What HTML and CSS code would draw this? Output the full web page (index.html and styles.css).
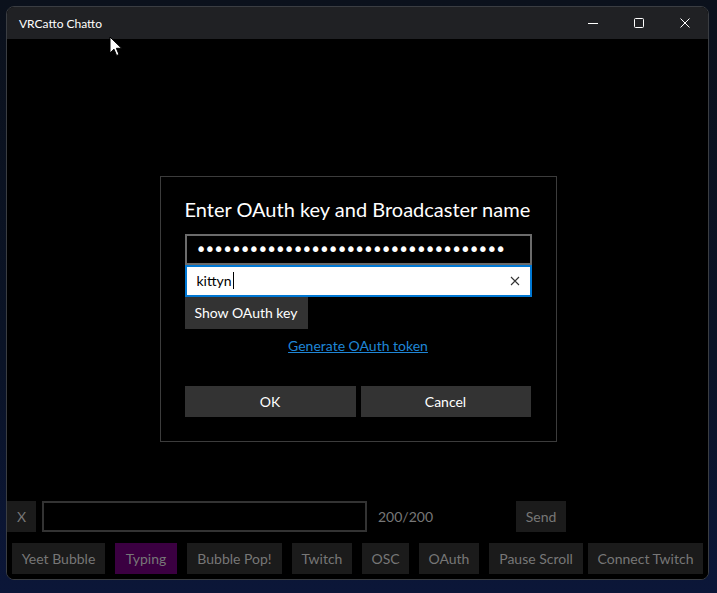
FILE: index.html
```html
<!DOCTYPE html>
<html>
<head>
<meta charset="utf-8">
<title>VRCatto Chatto</title>
<link rel="stylesheet" href="styles.css">
</head>
<body>
<div class="desk">
  <div class="window">
    <div class="titlebar">
      <span class="app-title">VRCatto Chatto</span>
      <div class="caption">
        <span class="cap-btn"><svg width="10" height="10" viewBox="0 0 10 10"><path d="M0 5.5H10" stroke="#fff" stroke-width="1"/></svg></span>
        <span class="cap-btn"><svg width="10" height="10" viewBox="0 0 10 10"><rect x="0.5" y="0.5" width="9" height="9" rx="1" fill="none" stroke="#fff" stroke-width="1"/></svg></span>
        <span class="cap-btn"><svg width="10" height="10" viewBox="0 0 10 10"><path d="M0.5 0.5L9.5 9.5M9.5 0.5L0.5 9.5" stroke="#fff" stroke-width="1"/></svg></span>
      </div>
    </div>
    <div class="content">
      <div class="spacer"></div>
      <div class="row1">
        <button class="btn-dim btn-x">X</button>
        <div class="msg-input"></div>
        <span class="counter">200/200</span>
        <button class="btn-dim btn-send">Send</button>
      </div>
      <div class="row2">
        <button class="btn-dim w-yeet">Yeet Bubble</button>
        <button class="btn-dim btn-typing w-typing">Typing</button>
        <button class="btn-dim w-pop">Bubble Pop!</button>
        <button class="btn-dim w-twitch">Twitch</button>
        <button class="btn-dim w-osc">OSC</button>
        <button class="btn-dim w-oauth">OAuth</button>
        <button class="btn-dim w-pause">Pause Scroll</button>
        <button class="btn-dim w-connect">Connect Twitch</button>
      </div>

      <div class="overlay">
        <div class="dialog">
          <div class="dlg-title">Enter OAuth key and Broadcaster name</div>
          <div class="pw-box"><span class="dots">•••••••••••••••••••••••••••••••••••</span></div>
          <div class="name-box"><span class="name-text">kittyn</span><span class="caret"></span>
            <svg class="clear" width="10" height="10" viewBox="0 0 10 10"><path d="M1 1L9 9M9 1L1 9" stroke="#333" stroke-width="1.1"/></svg>
          </div>
          <button class="btn-gray btn-show">Show OAuth key</button>
          <div class="link-row"><a class="link" href="#">Generate OAuth token</a></div>
          <div class="dlg-actions">
            <button class="btn-gray btn-ok">OK</button>
            <button class="btn-gray btn-cancel">Cancel</button>
          </div>
        </div>
      </div>
    </div>
  </div>
</div>
<svg class="cursor" width="14" height="22" viewBox="0 0 14 22"><path d="M1 1V17L5 13.2L7.6 19.5L10 18.5L7.4 12.3H12.6Z" fill="#fff" stroke="#000" stroke-width="1" stroke-linejoin="round"/></svg>
</body>
</html>
```

FILE: styles.css
```css
* { box-sizing: border-box; }
html, body {
  margin: 0;
  width: 717px;
  height: 593px;
  overflow: hidden;
}
body {
  background: linear-gradient(180deg, #0b111c 0%, #0a1326 60%, #0b1638 100%);
  font-family: Lato, "Noto Sans", sans-serif;
  position: relative;
}
.desk {
  padding: 6px 8px 13px 6px;
  height: 593px;
}
.window {
  width: 703px;
  height: 574px;
  border: 1px solid #3a3d42;
  border-radius: 8px;
  overflow: hidden;
  display: flex;
  flex-direction: column;
  background: #000;
}
.titlebar {
  height: 32px;
  background: #202124;
  display: flex;
  align-items: center;
  flex: none;
}
.app-title {
  color: #fff;
  font-size: 12px;
  padding-left: 12px;
  padding-top: 1px;
}
.caption {
  margin-left: auto;
  display: flex;
  height: 32px;
}
.cap-btn {
  width: 46px;
  height: 32px;
  display: flex;
  align-items: center;
  justify-content: center;
}
.content {
  flex: 1;
  position: relative;
  display: flex;
  flex-direction: column;
  padding-bottom: 5px;
  background: #000;
}
.spacer { flex: 1; }
button {
  font-family: inherit;
  border: none;
  padding: 0;
  margin: 0;
  cursor: default;
}
.btn-dim {
  background: #1b1b1b;
  color: #777;
  font-size: 14px;
  height: 31px;
}
.row1 {
  display: flex;
  align-items: center;
  height: 31px;
}
.btn-x { width: 29px; }
.msg-input {
  margin-left: 6px;
  width: 325px;
  height: 31px;
  border: 2px solid #333;
}
.counter {
  margin-left: 11px;
  color: #777;
  font-size: 14px;
  width: 138px;
}
.btn-send { width: 50px; }
.row2 {
  margin-top: 11px;
  display: flex;
  gap: 10px;
  padding-left: 5px;
}
.btn-typing { background: #3b0041; }
.w-yeet { width: 93px; }
.w-typing { width: 62px; }
.w-pop { width: 95px; }
.w-twitch { width: 60px; }
.w-osc { width: 47px; }
.w-oauth { width: 60px; }
.w-pause { width: 94px; }
.w-connect { width: 115px; margin-left: -5px; }

.overlay {
  position: absolute;
  inset: 0;
  display: flex;
  align-items: center;
  justify-content: center;
}
.dialog {
  width: 397px;
  height: 266px;
  border: 1px solid #3c3c3c;
  background: #000;
  padding: 18px 24px 0 24px;
  display: flex;
  flex-direction: column;
  margin-left: 1px;
  margin-top: -1px;
}
.dlg-title {
  color: #fff;
  font-size: 20px;
  line-height: 28px;
  white-space: nowrap;
}
.pw-box {
  margin-top: 11px;
  height: 31px;
  border: 2px solid #6b6b6b;
  display: flex;
  align-items: center;
  padding-left: 9px;
  overflow: hidden;
}
.dots {
  color: #fff;
  font-family: "DejaVu Sans", sans-serif;
  font-size: 19px;
  letter-spacing: -2.4px;
  line-height: 1;
  white-space: nowrap;
}
.name-box {
  height: 32px;
  background: #fff;
  border: 2px solid #0078d4;
  display: flex;
  align-items: center;
  padding-left: 10px;
  position: relative;
}
.name-text {
  color: #000;
  font-size: 14px;
}
.caret {
  width: 1px;
  height: 17px;
  background: #000;
  margin-left: 1px;
}
.clear {
  position: absolute;
  right: 10px;
  top: 9px;
}
.btn-gray {
  background: #333;
  color: #fff;
  font-size: 14px;
}
.btn-show {
  width: 123px;
  height: 32px;
  align-self: flex-start;
}
.link-row {
  text-align: center;
  margin-top: 6px;
  height: 20px;
  line-height: 20px;
}
.link {
  color: #1f86d6;
  font-size: 14px;
  text-decoration: underline;
}
.dlg-actions {
  margin-top: 31px;
  display: flex;
  gap: 5px;
}
.btn-ok { width: 171px; height: 31px; }
.btn-cancel { width: 170px; height: 31px; }

.cursor {
  position: absolute;
  left: 109px;
  top: 36px;
}
```
